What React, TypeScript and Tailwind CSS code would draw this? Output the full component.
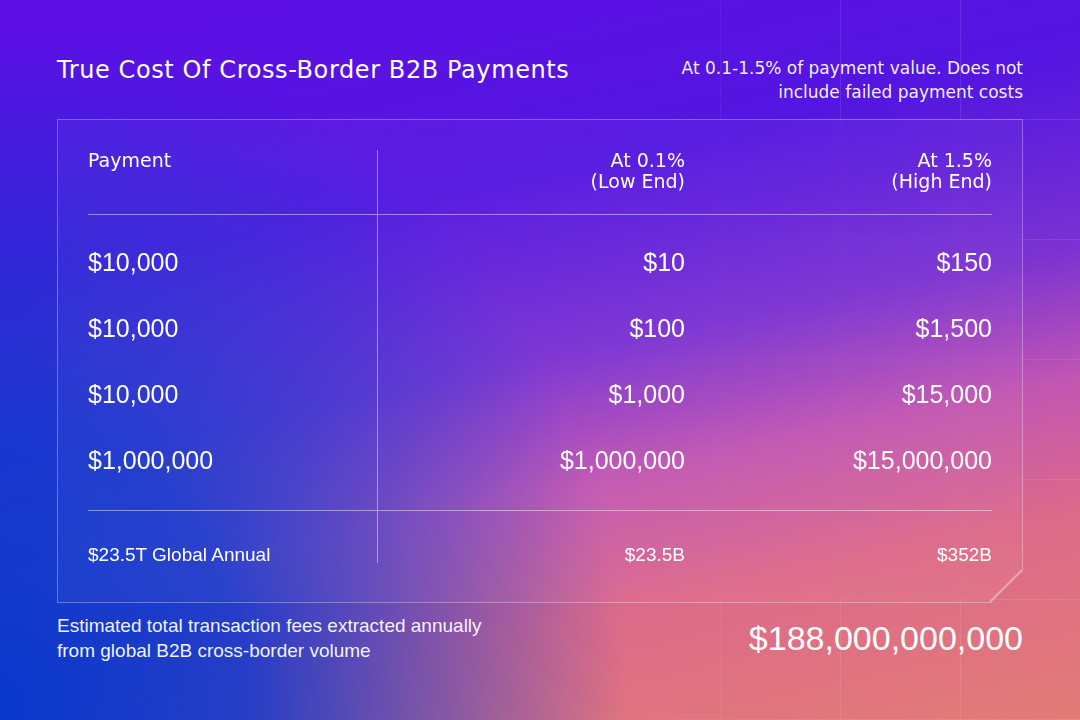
import React from 'react';

const display = "font-['DejaVu_Sans',sans-serif]";
const plain = "font-['Liberation_Sans',Arial,sans-serif]";

const rows = [
  ['$10,000', '$10', '$150'],
  ['$10,000', '$100', '$1,500'],
  ['$10,000', '$1,000', '$15,000'],
  ['$1,000,000', '$1,000,000', '$15,000,000'],
];

function CostTable() {
  return (
    <div className="relative mx-[57px] bg-white/[0.03] backdrop-blur-[6px] border border-white/30 pt-[30px] pr-[30px] pb-[39px] pl-[30px] [clip-path:polygon(0_0,100%_0,100%_calc(100%_-_32px),calc(100%_-_32px)_100%,0_100%)]">
      {/* cut corner edge */}
      <svg className="absolute right-0 bottom-0 w-8 h-8" viewBox="0 0 32 32">
        <line x1="32" y1="0" x2="0" y2="32" stroke="rgba(255,255,255,0.38)" strokeWidth="2" />
      </svg>

      {/* Header */}
      <div className={`grid grid-cols-[290px_1fr_1fr] text-[19px] leading-[21px] text-white ${display}`}>
        <div className="border-r border-white/45 pb-[22px]">Payment</div>
        <div className="text-right pb-[22px]">
          At 0.1%
          <br />
          (Low End)
        </div>
        <div className="text-right pb-[22px]">
          At 1.5%
          <br />
          (High End)
        </div>
      </div>

      <div className="h-px bg-white/45" />

      {/* Values */}
      <div className={`grid grid-cols-[290px_1fr_1fr] text-[25px] text-white ${plain}`}>
        {[0, 1, 2].map((col) => (
          <div
            key={col}
            className={col === 0 ? 'border-r border-white/45 pt-[15px] pb-4' : 'pt-[15px] pb-4'}
          >
            {rows.map((r, i) => (
              <div
                key={i}
                className={`h-[66px] flex items-center ${col === 0 ? '' : 'justify-end'}`}
              >
                {r[col]}
              </div>
            ))}
          </div>
        ))}
      </div>

      <div className="h-px bg-white/45" />

      {/* Footer */}
      <div className={`grid grid-cols-[290px_1fr_1fr] text-[19px] leading-4 text-white ${plain}`}>
        <div className="border-r border-white/45 pt-[36px]">$23.5T Global Annual</div>
        <div className="pt-[36px] text-right">$23.5B</div>
        <div className="pt-[36px] text-right">$352B</div>
      </div>
    </div>
  );
}

export default function App() {
  return (
    <div className="relative w-[1080px] h-[720px] overflow-hidden bg-[image:radial-gradient(ellipse_58%_95%_at_0%_98%,#0838cc_0%,rgba(14,56,206,0.88)_40%,rgba(14,56,206,0)_100%),linear-gradient(168deg,#5e0ee6_0%,#5416e0_30%,#7a32d2_50%,#c256b2_64%,#dc6a8a_78%,#e27c76_100%)]">
      {/* faint background grid */}
      <div className="absolute inset-0 pointer-events-none bg-[image:linear-gradient(to_right,rgba(255,255,255,0.1)_1px,transparent_1px),linear-gradient(to_bottom,rgba(255,255,255,0.1)_1px,transparent_1px)] bg-[size:120px_120px] bg-[position:0_-1px] [mask-image:linear-gradient(to_right,transparent_52%,black_80%)]" />

      <div className="relative">
        <div className="flex justify-between items-start px-[57px] pt-[56px]">
          <h1 className={`text-[24px] leading-[28px] tracking-[0.6px] text-white ${display}`}>
            True Cost Of Cross-Border B2B Payments
          </h1>
          <p className={`text-[17px] leading-6 text-white/95 text-right ${display}`}>
            At 0.1-1.5% of payment value. Does not
            <br />
            include failed payment costs
          </p>
        </div>

        <div className="mt-[15px]">
          <CostTable />
        </div>

        <div className={`flex justify-between items-center px-[57px] mt-[10px] text-white ${plain}`}>
          <p className="text-[19px] leading-[25px] text-white/95">
            Estimated total transaction fees extracted annually
            <br />
            from global B2B cross-border volume
          </p>
          <p className="text-[34px] leading-10">$188,000,000,000</p>
        </div>
      </div>
    </div>
  );
}
